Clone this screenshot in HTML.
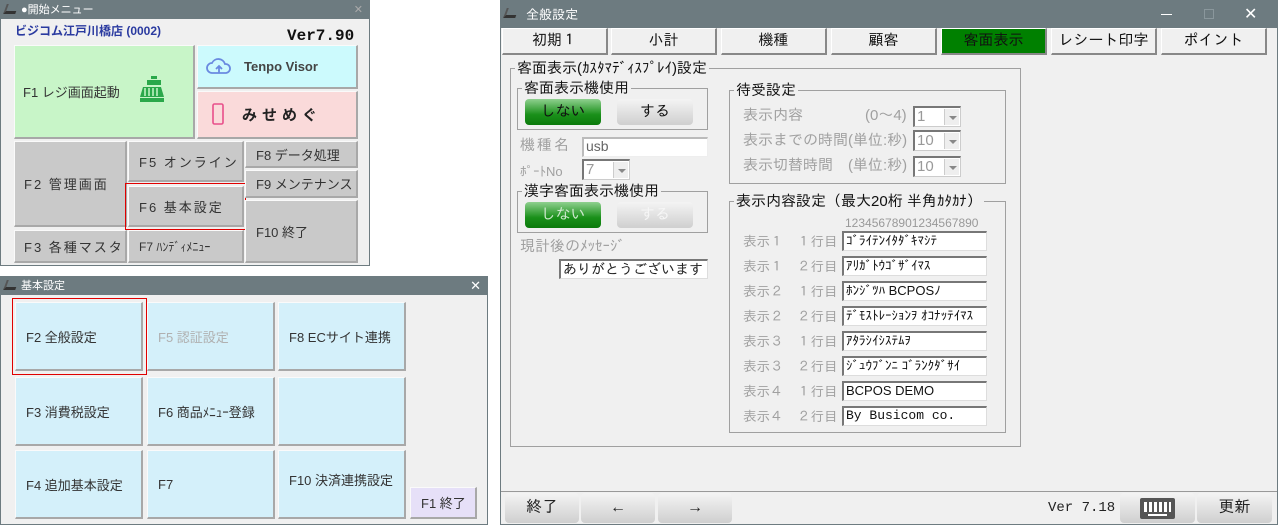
<!DOCTYPE html>
<html><head><meta charset="utf-8"><style>
*{box-sizing:border-box;margin:0;padding:0}
body{width:1278px;height:525px;background:#fff;position:relative;overflow:hidden;font-family:"Liberation Sans","Noto Sans CJK JP",sans-serif;white-space:nowrap}
.a{position:absolute}
.win{position:absolute;background:#f0f0f0;border:1px solid #6d7b80}
.tb{position:absolute;left:0;right:0;top:0;background:#6d7b80;color:#fff;font-size:11px;padding-left:20px}
.ic{position:absolute;left:4px;top:3px;width:12px;height:10px;border-bottom:3px solid #333;border-left:2px solid #555;transform:skewX(-20deg)}
.b{position:absolute;display:flex;align-items:center;font-size:13px;color:#333;border-right:2px solid #a8a8a8;border-bottom:2px solid #a8a8a8;border-top:1px solid #fafafa;border-left:1px solid #fafafa}
.g{background:#c9c9c9}
.c{background:#d4f0fa;padding-left:10px}
.m{font-family:"Liberation Sans","IPAGothic","Noto Sans CJK JP",sans-serif}
.tab{position:absolute;top:28px;height:27px;width:106px;background:#f0f0f0;border:1px solid #fff;border-right:2px solid #888;border-bottom:2px solid #888;text-align:center;font-size:15px;line-height:24px;color:#111}
.gb{position:absolute;border:1px solid #a0a0a0}
.gl{position:absolute;background:#f0f0f0;font-size:15px;color:#111;padding:0 2px;line-height:16px}
.inp{position:absolute;background:#fff;border-top:2px solid #777;border-left:2px solid #777;border-right:1px solid #ddd;border-bottom:1px solid #ddd;font-size:13px;line-height:15px;padding-left:2px;color:#111;overflow:hidden}
.btg{position:absolute;height:26px;width:76px;border-radius:4px;background:linear-gradient(#8fd08f,#1a901a 60%,#0b7a0b);text-align:center;color:#111;font-size:15px;line-height:26px}
.bts{position:absolute;height:26px;width:76px;border-radius:4px;background:linear-gradient(#f4f4f4,#cfcfcf);text-align:center;color:#111;font-size:15px;line-height:26px}
.sel{position:absolute;background:#fff;border-top:2px solid #777;border-left:2px solid #777;border-right:1px solid #ccc;border-bottom:1px solid #ccc;font-size:15px;color:#999;padding-left:2px;line-height:17px}
.sel i{position:absolute;right:1px;top:1px;bottom:1px;width:15px;background:#eee;border-left:1px solid #ccc}
.sel i:after{content:"";position:absolute;left:4px;top:7px;border:4px solid transparent;border-top:4px solid #888}
.lb{position:absolute;font-size:15px;color:#a0a0a0;line-height:16px}
.rl{font-size:13.5px}
.bb{position:absolute;top:493px;height:30px;border-radius:4px;background:linear-gradient(#f4f4f4,#cfcfcf);text-align:center;font-size:16px;line-height:30px;color:#222}
</style></head><body>

<!-- Window 1 -->
<div class="win" style="left:0;top:0;width:370px;height:266px">
 <div class="tb" style="height:18px;line-height:18px">●開始メニュー<span class="ic"></span><span style="position:absolute;right:6px;color:#aaa">✕</span></div>
 <div class="a" style="left:14px;top:21px;font-size:12px;color:#2a3aa0;font-weight:bold">ビジコム江戸川橋店 (0002)</div>
 <div class="a" style="left:286px;top:26px;font-size:16px;font-weight:bold;font-family:'Liberation Mono',monospace;color:#111">Ver7.90</div>
 <div class="b" style="left:13px;top:44px;width:181px;height:94px;background:#c8f5c8;padding-left:8px">F1 レジ画面起動
  <svg style="position:absolute;left:124px;top:30px" width="26" height="28" viewBox="0 0 26 28"><rect x="12" y="0" width="6" height="3" fill="#2aa84a"/><rect x="8" y="4" width="14" height="5" fill="#2aa84a"/><path d="M4 11h18l3 10H1z" fill="#2aa84a"/><path d="M6 12v8M10 12v8M14 12v8M18 12v8" stroke="#c8f5c8" stroke-width="1.5"/><rect x="1" y="22" width="24" height="4" fill="#2aa84a"/></svg></div>
 <div class="b" style="left:196px;top:44px;width:161px;height:44px;background:#ccfafd;padding-left:46px;font-size:13px;font-weight:bold;color:#444">Tenpo Visor
  <svg style="position:absolute;left:8px;top:11px" width="26" height="18" viewBox="0 0 26 18"><path d="M6 16a5 5 0 0 1 0-10a7 7 0 0 1 13 1a4.5 4.5 0 0 1 1 9z" fill="none" stroke="#6a8ae0" stroke-width="1.8"/><path d="M13 16V9M10 12l3-3 3 3" stroke="#6a8ae0" stroke-width="1.8" fill="none"/></svg></div>
 <div class="b" style="left:196px;top:90px;width:161px;height:48px;background:#fadada;padding-left:44px;font-size:15px;font-weight:bold;color:#222;letter-spacing:5px">みせめぐ
  <svg style="position:absolute;left:14px;top:11px" width="12" height="22"><rect x="1" y="1" width="10" height="20" rx="1.5" fill="none" stroke="#e84f8a" stroke-width="1.6"/></svg></div>
 <div class="b g" style="left:13px;top:140px;width:113px;height:86px;padding-left:9px;letter-spacing:2px">F2 管理画面</div>
 <div class="b g" style="left:127px;top:140px;width:116px;height:41px;padding-left:10px;letter-spacing:2px">F5 オンライン</div>
 <div class="b g" style="left:127px;top:185px;width:116px;height:41px;padding-left:10px;letter-spacing:2px">F6 基本設定</div>
 <div class="a" style="left:124px;top:182px;width:121px;height:47px;border:1.5px solid #e00000"></div>
 <div class="b g" style="left:244px;top:140px;width:113px;height:27px;padding-left:10px">F8 データ処理</div>
 <div class="b g" style="left:244px;top:169px;width:113px;height:28px;padding-left:10px">F9 メンテナンス</div>
 <div class="b g" style="left:244px;top:199px;width:113px;height:63px;padding-left:10px">F10 終了</div>
 <div class="b g" style="left:13px;top:229px;width:113px;height:33px;padding-left:9px;letter-spacing:2px">F3 各種マスタ</div>
 <div class="b g" style="left:127px;top:229px;width:116px;height:33px;padding-left:10px;font-size:12px">F7 ﾊﾝﾃﾞｨﾒﾆｭｰ</div>
</div>

<!-- Window 2 -->
<div class="win" style="left:0;top:276px;width:488px;height:249px">
 <div class="tb" style="height:18px;line-height:18px">基本設定<span class="ic"></span><span style="position:absolute;right:6px;font-size:13px">✕</span></div>
 <div class="b c" style="left:14px;top:25px;width:128px;height:69px">F2 全般設定</div>
 <div class="a" style="left:11px;top:21px;width:135px;height:77px;border:1.5px solid #e00000"></div>
 <div class="b c" style="left:146px;top:25px;width:128px;height:69px;color:#b0b0b0">F5 認証設定</div>
 <div class="b c" style="left:277px;top:25px;width:128px;height:69px">F8 ECサイト連携</div>
 <div class="b c" style="left:14px;top:100px;width:128px;height:69px">F3 消費税設定</div>
 <div class="b c" style="left:146px;top:100px;width:128px;height:69px">F6 商品ﾒﾆｭｰ登録</div>
 <div class="b c" style="left:277px;top:100px;width:128px;height:69px"></div>
 <div class="b c" style="left:14px;top:173px;width:128px;height:69px">F4 追加基本設定</div>
 <div class="b c" style="left:146px;top:173px;width:128px;height:69px">F7</div>
 <div class="b c" style="left:277px;top:173px;width:128px;height:69px;padding-bottom:10px">F10 決済連携設定</div>
 <div class="b" style="left:409px;top:210px;width:67px;height:32px;background:#e6e0f8;padding-left:10px">F1 終了</div>
</div>

<!-- Window 3 -->
<div class="win m" style="left:500px;top:0;width:778px;height:525px;border:1px solid #6d7b80">
 <div class="tb" style="height:27px;line-height:27px;font-size:13px;padding-left:25px">全般設定<span class="ic" style="top:7px"></span>
  <span style="position:absolute;left:660px;top:13px;width:11px;border-top:1px solid #fff"></span>
  <span style="position:absolute;left:703px;top:8px;width:10px;height:10px;border:1px solid #8a979c"></span>
  <span style="position:absolute;left:743px;top:0;font-size:16px">✕</span></div>
</div>
<div class="m">
 <div class="tab" style="left:502px">初期１</div>
 <div class="tab" style="left:611px">小計</div>
 <div class="tab" style="left:721px">機種</div>
 <div class="tab" style="left:831px">顧客</div>
 <div class="tab" style="left:941px;background:#008000;border-color:#fff #888 #888 #fff">客面表示</div>
 <div class="tab" style="left:1051px">レシート印字</div>
 <div class="tab" style="left:1161px">ポイント</div>

 <div class="gb" style="left:510px;top:68px;width:511px;height:379px"></div>
 <div class="gl" style="left:515px;top:61px">客面表示(ｶｽﾀﾏﾃﾞｨｽﾌﾟﾚｲ)設定</div>

 <div class="gb" style="left:517px;top:88px;width:191px;height:42px"></div>
 <div class="gl" style="left:522px;top:81px">客面表示機使用</div>
 <div class="btg" style="left:525px;top:99px">しない</div>
 <div class="bts" style="left:617px;top:99px">する</div>

 <div class="lb" style="left:520px;top:138px;letter-spacing:2px">機種名</div>
 <div class="inp" style="left:582px;top:137px;width:126px;height:20px;color:#666;font-size:14px;border-color:#bbb #eee #eee #bbb">usb</div>
 <div class="lb" style="left:520px;top:164px;font-size:13px">ﾎﾟｰﾄNo</div>
 <div class="sel" style="left:582px;top:159px;width:48px;height:21px">7<i></i></div>

 <div class="gb" style="left:517px;top:191px;width:191px;height:42px"></div>
 <div class="gl" style="left:522px;top:184px">漢字客面表示機使用</div>
 <div class="btg" style="left:525px;top:202px;color:#cde8cd">しない</div>
 <div class="bts" style="left:617px;top:202px;color:#f6f6f6">する</div>

 <div class="lb" style="left:520px;top:239px">現計後のﾒｯｾｰｼﾞ</div>
 <div class="inp" style="left:559px;top:259px;width:149px;height:20px;font-size:14px;line-height:17px;color:#222">ありがとうございます</div>

 <div class="gb" style="left:729px;top:90px;width:277px;height:94px"></div>
 <div class="gl" style="left:734px;top:83px">待受設定</div>
 <div class="lb" style="left:743px;top:108px">表示内容</div><div class="lb" style="left:865px;top:108px">(0～4)</div>
 <div class="sel" style="left:913px;top:106px;width:48px;height:21px">1<i></i></div>
 <div class="lb" style="left:743px;top:133px">表示までの時間(単位:秒)</div>
 <div class="sel" style="left:913px;top:130px;width:48px;height:21px">10<i></i></div>
 <div class="lb" style="left:743px;top:158px">表示切替時間　(単位:秒)</div>
 <div class="sel" style="left:913px;top:156px;width:48px;height:21px">10<i></i></div>

 <div class="gb" style="left:729px;top:201px;width:277px;height:232px"></div>
 <div class="gl" style="left:734px;top:194px">表示内容設定（最大20桁 半角ｶﾀｶﾅ）</div>
 <div class="lb" style="left:845px;top:215px;font-size:12px;color:#999">12345678901234567890</div>

 <div class="lb rl" style="left:743px;top:234px">表示１　１行目</div><div class="inp" style="left:842px;top:231px;width:145px;height:20px">ｺﾞﾗｲﾃﾝｲﾀﾀﾞｷﾏｼﾃ</div>
 <div class="lb rl" style="left:743px;top:259px">表示１　２行目</div><div class="inp" style="left:842px;top:256px;width:145px;height:20px">ｱﾘｶﾞﾄｳｺﾞｻﾞｲﾏｽ</div>
 <div class="lb rl" style="left:743px;top:284px">表示２　１行目</div><div class="inp" style="left:842px;top:281px;width:145px;height:20px">ﾎﾝｼﾞﾂﾊ BCPOSﾉ</div>
 <div class="lb rl" style="left:743px;top:309px">表示２　２行目</div><div class="inp" style="left:842px;top:306px;width:145px;height:20px">ﾃﾞﾓｽﾄﾚｰｼｮﾝｦ ｵｺﾅｯﾃｲﾏｽ</div>
 <div class="lb rl" style="left:743px;top:334px">表示３　１行目</div><div class="inp" style="left:842px;top:331px;width:145px;height:20px">ｱﾀﾗｼｲｼｽﾃﾑｦ</div>
 <div class="lb rl" style="left:743px;top:359px">表示３　２行目</div><div class="inp" style="left:842px;top:356px;width:145px;height:20px">ｼﾞｭｳﾌﾞﾝﾆ ｺﾞﾗﾝｸﾀﾞｻｲ</div>
 <div class="lb rl" style="left:743px;top:384px">表示４　１行目</div><div class="inp" style="left:842px;top:381px;width:145px;height:20px">BCPOS DEMO</div>
 <div class="lb rl" style="left:743px;top:409px">表示４　２行目</div><div class="inp" style="left:842px;top:406px;width:145px;height:20px;font-family:'Liberation Mono',monospace;font-size:13px">By Busicom co.</div>

 <div class="a" style="left:501px;top:491px;width:776px;border-top:1px solid #999"></div>
 <div class="bb" style="left:505px;width:74px">終了</div>
 <div class="bb" style="left:581px;width:74px">←</div>
 <div class="bb" style="left:658px;width:74px">→</div>
 <div class="a" style="left:1048px;top:500px;font-size:14px;font-family:'Liberation Mono',monospace;color:#222">Ver 7.18</div>
 <div class="bb" style="left:1120px;width:75px"><span style="position:absolute;left:20px;top:5px;width:35px;height:21px;background:#555;border-radius:2px"></span><span style="position:absolute;left:24px;top:9px;width:27px;height:10px;background:repeating-linear-gradient(90deg,#fff 0 3px,transparent 3px 5px)"></span><span style="position:absolute;left:28px;top:21px;width:19px;height:2px;background:#fff"></span></div>
 <div class="bb" style="left:1197px;width:75px">更新</div>
</div>
</body></html>
